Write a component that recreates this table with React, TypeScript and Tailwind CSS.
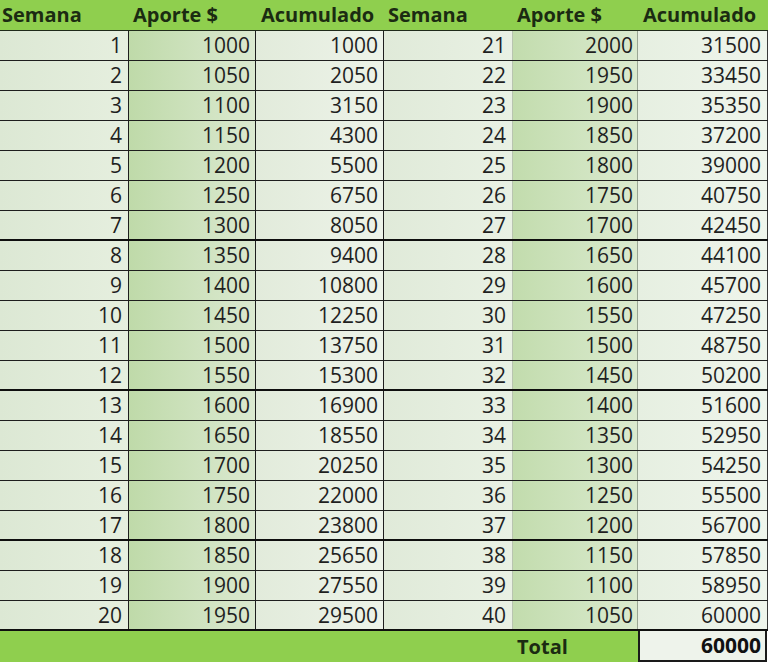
import React from "react";

const rows = Array.from({ length: 20 }, (_, i) => {
  const w1 = i + 1;
  const a1 = 1000 + 50 * i;
  const acc1 = Array.from({ length: i + 1 }, (_, k) => 1000 + 50 * k).reduce((s, v) => s + v, 0);
  const w2 = i + 21;
  const a2 = 2000 - 50 * i;
  const acc2 = 29500 + Array.from({ length: i + 1 }, (_, k) => 2000 - 50 * k).reduce((s, v) => s + v, 0);
  return { w1, a1, acc1, w2, a2, acc2 };
});

const font = { fontFamily: '"Open Sans", "Liberation Sans", sans-serif' };

export default function App() {
  return (
    <div className="w-[768px] h-[664px] bg-white overflow-hidden" style={font}>
      {/* header */}
      <div className="grid grid-cols-[129px_127px_128px_129px_125px_130px] grid-rows-[30px] h-[31px] bg-[#8fcf4e] border-b border-[#1f2a1a] text-[20px] font-bold text-[#1b2b12] items-center">
        <div className="pl-[2px] leading-none">Semana</div>
        <div className="pl-[4px] leading-none">Aporte $</div>
        <div className="pl-[5px] leading-none">Acumulado</div>
        <div className="pl-[4px] leading-none">Semana</div>
        <div className="pl-[4px] leading-none">Aporte $</div>
        <div className="pl-[5px] leading-none">Acumulado</div>
      </div>
      {rows.map((r, i) => {
        const thick = i === 6 || i === 11 || i === 16 || i === 19;
        return (
          <div
            key={i}
            className={
              thick
                ? "grid grid-cols-[129px_127px_128px_129px_125px_130px] grid-rows-[28px] h-[30px] text-[21px] leading-none text-[#1f1f1f] border-b-2 border-[#0f0f0f]"
                : "grid grid-cols-[129px_127px_128px_129px_125px_130px] grid-rows-[29px] h-[30px] text-[21px] leading-none text-[#1f1f1f] border-b border-[#1e1e1e]"
            }
          >
            <div className="flex items-center justify-end pr-[6px] border-r border-[#1e1e1e] bg-linear-to-r from-[#dce8d4] to-[#e6efdf]">
              {r.w1}
            </div>
            <div className="flex items-center justify-end pr-[5px] border-r border-[#1e1e1e] bg-linear-to-r from-[#bfdaa9] to-[#dbe9d0]">
              {r.a1}
            </div>
            <div className="flex items-center justify-end pr-[5px] border-r border-[#1e1e1e] bg-linear-to-r from-[#e2ebdb] to-[#edf3e9]">
              {r.acc1}
            </div>
            <div className="flex items-center justify-end pr-[6px] border-r border-[#b8c4b0] bg-linear-to-r from-[#e0ead9] to-[#e9f1e4]">
              {r.w2}
            </div>
            <div className="flex items-center justify-end pr-[4px] border-r border-[#9aa694] bg-linear-to-r from-[#c2dcad] to-[#dbeacf]">
              {r.a2}
            </div>
            <div className="flex items-center justify-end pr-[6px] border-r border-[#3a3a3a] bg-linear-to-r from-[#e6efe1] to-[#eff5ec]">
              {r.acc2}
            </div>
          </div>
        );
      })}
      {/* total */}
      <div className="flex h-[31px]">
        <div className="w-[638px] bg-[#8fcf4e] flex items-center">
          <div className="ml-[517px] text-[20px] font-bold text-[#1b2b12] leading-none">Total</div>
        </div>
        <div className="w-[129px] border-2 border-[#1a1a1a] border-t-0 bg-[#eef3eb] flex items-center justify-end pr-[4px] text-[21px] leading-none font-bold text-[#111]">
          60000
        </div>
      </div>
    </div>
  );
}
